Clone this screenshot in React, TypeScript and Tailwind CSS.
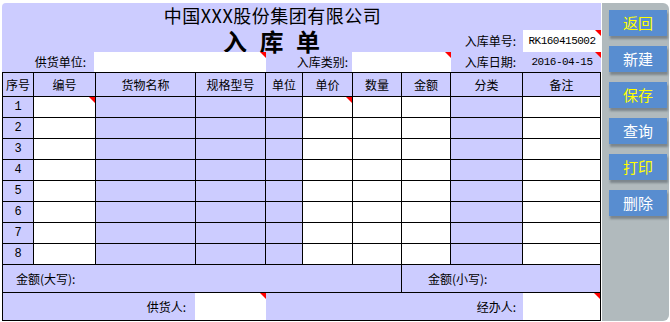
import React from "react";

const Mark = () => (
  <span className="absolute right-0 top-0 h-[6px] w-[6px] bg-[#ff0000] [clip-path:polygon(0_0,100%_0,100%_100%)]" />
);

const bodyBg = [
  "bg-[#ccccff]",
  "bg-white",
  "bg-[#ccccff]",
  "bg-[#ccccff]",
  "bg-[#ccccff]",
  "bg-white",
  "bg-white",
  "bg-white",
  "bg-[#ccccff]",
  "bg-white",
];

const headers = ["序号", "编号", "货物名称", "规格型号", "单位", "单价", "数量", "金额", "分类", "备注"];

const buttons = [
  { t: "返回", c: "text-[#ffff00]" },
  { t: "新建", c: "text-white" },
  { t: "保存", c: "text-[#ffff00]" },
  { t: "查询", c: "text-white" },
  { t: "打印", c: "text-[#ffff00]" },
  { t: "删除", c: "text-white" },
];

export default function App() {
  return (
    <div className="h-[322px] w-[670px] bg-white pl-[2px] pt-[3px] text-black [font-family:'Noto_Sans_CJK_SC',sans-serif]">
      <div className="flex">
        {/* main panel */}
        <div className="h-[318px] w-[599px] rounded-tl-[4px] bg-[#ccccff]">
          {/* header area */}
          <div className="grid grid-cols-[32px_62px_100px_70px_37px_50px_49px_49px_72px_78px]">
            <div className="col-span-10 h-[27px]">
              <div className="w-[541px] text-center text-[18px] leading-[24px] tracking-[0.5px]">
                中国XXX股份集团有限公司
              </div>
            </div>
            <div className="col-span-8 h-[22px] pl-[90px] text-center text-[24px] font-bold leading-[22px] [word-spacing:7px]">
              入 库 单
            </div>
            <div className="h-[22px] pr-[7px] text-right text-[12px] leading-[22px]">入库单号:</div>
            <div className="relative flex h-[22px] items-center justify-center bg-white font-['Liberation_Mono'] text-[11px] tracking-[-0.5px]">
              RK160415002
              <Mark />
            </div>
            <div className="col-span-2 h-[20px] pr-[10px] text-right text-[12px] leading-[20px]">供货单位:</div>
            <div className="relative col-span-2 -ml-[2px] h-[20px] bg-white">
              <Mark />
            </div>
            <div className="col-span-2 h-[20px] pr-[5px] text-right text-[12px] leading-[20px]">入库类别:</div>
            <div className="relative col-span-2 -ml-[1px] h-[20px] bg-white">
              <Mark />
            </div>
            <div className="h-[20px] pr-[7px] text-right text-[12px] leading-[20px]">入库日期:</div>
            <div className="relative flex h-[20px] items-center justify-center font-['Liberation_Mono'] text-[11px] tracking-[-0.5px]">
              2016-04-15
              <Mark />
            </div>
          </div>

          {/* table */}
          <div className="grid grid-cols-[31px_62px_100px_70px_37px_50px_49px_49px_72px_78px] border-l border-t border-black">
            {headers.map((h) => (
              <div
                key={h}
                className="flex h-[24px] items-center justify-center border-b border-r border-black text-[12px]"
              >
                {h}
              </div>
            ))}
            {[1, 2, 3, 4, 5, 6, 7, 8].map((n) =>
              bodyBg.map((bg, i) => (
                <div
                  key={`${n}-${i}`}
                  className={`relative flex h-[21px] items-center justify-center border-b border-r border-black ${bg}`}
                >
                  {i === 0 && <span className="font-['Liberation_Mono'] text-[12px]">{n}</span>}
                  {n === 1 && (i === 1 || i === 5) && <Mark />}
                </div>
              ))
            )}
            <div className="col-span-7 flex h-[28px] items-center border-b border-r border-black pl-[13px] text-[12px]">
              金额(大写):
            </div>
            <div className="col-span-3 flex h-[28px] items-center border-b border-r border-black pl-[26px] text-[12px]">
              金额(小写):
            </div>
            <div className="col-span-3 flex h-[28px] items-center justify-end border-b border-black pr-[10px] text-[12px]">
              供货人:
            </div>
            <div className="relative -ml-[1px] h-[28px] border-b border-black bg-white">
              <Mark />
            </div>
            <div className="col-span-5 flex h-[28px] items-center justify-end border-b border-black pr-[7px] text-[12px]">
              经办人:
            </div>
            <div className="relative h-[28px] border-b border-r border-black bg-white">
              <Mark />
            </div>
          </div>
        </div>

        {/* sidebar */}
        <div className="ml-px flex h-[318px] w-[67px] flex-col gap-[10px] rounded-r-[6px] bg-[#b1babd] pl-[7px] pt-[7px]">
          {buttons.map((b) => (
            <div
              key={b.t}
              className={`flex h-[26px] w-[58px] items-center justify-center bg-[#588dd0] text-[15px] shadow-[1px_3px_2px_rgba(60,70,80,0.45)] ${b.c}`}
            >
              {b.t}
            </div>
          ))}
        </div>
      </div>
    </div>
  );
}
